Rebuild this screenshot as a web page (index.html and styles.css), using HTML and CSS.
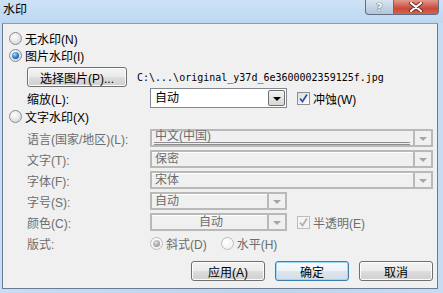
FILE: index.html
```html
<!DOCTYPE html>
<html lang="zh-CN">
<head>
    <meta charset="UTF-8">
    <title>水印</title>
    <link rel="stylesheet" href="styles.css">
</head>
<body>
    <div class="window">
        <div class="titlebar">
            <span class="title">水印</span>
            <div class="caption">
                <span class="cap help">?</span>
                <span class="cap close">
                    <svg width="16" height="10" viewBox="0 0 16 10">
                        <path d="M3 1 L13 9 M13 1 L3 9" stroke="#6b2a22" stroke-width="4" stroke-linecap="round"/>
                        <path d="M3 1 L13 9 M13 1 L3 9" stroke="#fff" stroke-width="2.2" stroke-linecap="round"/>
                    </svg>
                </span>
            </div>
        </div>

        <div class="client">
            <div class="radio-row"><span class="radio"></span>无水印(N)</div>
            <div class="radio-row"><span class="radio on"></span>图片水印(I)</div>

            <div class="sub">
                <div class="file-row">
                    <span class="btn pick">选择图片(P)...</span>
                    <span class="path">C:\...\original_y37d_6e3600002359125f.jpg</span>
                </div>
                <div class="scale-row">
                    <span class="label">缩放(L):</span>
                    <div class="combo">
                        <span class="combo-text">自动</span>
                        <span class="combo-arrow"></span>
                    </div>
                    <div class="check"><span class="box on">
                        <svg width="11" height="11" viewBox="0 0 11 11"><path d="M2 5.5 L4.5 8.5 L9 1.5" fill="none" stroke="#2e55a5" stroke-width="1.8"/></svg>
                    </span>冲蚀(W)</div>
                </div>
            </div>

            <div class="radio-row"><span class="radio"></span>文字水印(X)</div>

            <div class="text-grid">
                <span class="label off">语言(国家/地区)(L):</span>
                <div class="combo off wide">
                    <span class="combo-text lined">中文(中国)</span>
                    <span class="combo-arrow"></span>
                </div>

                <span class="label off">文字(T):</span>
                <div class="combo off wide">
                    <span class="combo-text">保密</span>
                    <span class="combo-arrow"></span>
                </div>

                <span class="label off">字体(F):</span>
                <div class="combo off wide">
                    <span class="combo-text">宋体</span>
                    <span class="combo-arrow"></span>
                </div>

                <span class="label off">字号(S):</span>
                <div class="combo off">
                    <span class="combo-text">自动</span>
                    <span class="combo-arrow"></span>
                </div>

                <span class="label off">颜色(C):</span>
                <div class="with-check">
                    <div class="combo off">
                        <span class="combo-text center">自动</span>
                        <span class="combo-arrow"></span>
                    </div>
                    <div class="check off"><span class="box">
                        <svg width="11" height="11" viewBox="0 0 11 11"><path d="M2 5.5 L4.5 8.5 L9 1.5" fill="none" stroke="#b0b0b0" stroke-width="1.8"/></svg>
                    </span>半透明(E)</div>
                </div>

                <span class="label off">版式:</span>
                <div class="layout-radios">
                    <div class="radio-row off"><span class="radio on dim"></span>斜式(D)</div>
                    <div class="radio-row off"><span class="radio dim"></span>水平(H)</div>
                </div>
            </div>

            <div class="actions">
                <span class="btn">应用(A)</span>
                <span class="btn default">确定</span>
                <span class="btn">取消</span>
            </div>
        </div>
    </div>
</body>
</html>
```

FILE: styles.css
```css
body {
    margin: 0;
    background: #c2d9f0;
    font-family: "Liberation Sans", "Noto Sans CJK SC", sans-serif;
    font-size: 12px;
    color: #000;
    text-autospace: no-autospace;
}
.window {
    width: 443px;
    height: 293px;
    background: linear-gradient(to right, #c6ddf3, #bad5ef 60%, #c6dcf2);
}
.titlebar {
    height: 23px;
    display: flex;
    justify-content: space-between;
    background: linear-gradient(to bottom, #cde2f6, #bdd7f0);
}
.title {
    padding-left: 3px;
    line-height: 20px;
}
.caption {
    display: flex;
    padding-right: 4px;
    height: 15px;
}
.cap {
    display: flex;
    align-items: center;
    justify-content: center;
    height: 14px;
    border: 1px solid #5e6f87;
    border-top: none;
}
.help {
    width: 27px;
    border-radius: 0 0 0 4px;
    background: linear-gradient(to bottom, #d9e4ef, #b4c6da);
    color: #fff;
    font-family: "DejaVu Sans", sans-serif;
    font-weight: bold;
    font-size: 11px;
    text-shadow: 0 0 1px #3a4a60, 0 0 1px #3a4a60;
}
.close {
    width: 44px;
    border-left: none;
    border-radius: 0 0 4px 0;
    background: linear-gradient(to bottom, #e49a8c, #c9493a 60%, #d4634f);
}
.client {
    box-sizing: border-box;
    margin-left: 2px;
    width: 436px;
    height: 266px;
    border: 1px solid #6c7b8f;
    border-top-color: #8e9bab;
    background: #f0f0f0;
    padding: 6px 0 0 6px;
}
.radio-row {
    display: flex;
    align-items: center;
    height: 17px;
    gap: 3px;
    white-space: nowrap;
}
.radio {
    box-sizing: border-box;
    width: 13px;
    height: 13px;
    border-radius: 50%;
    border: 1px solid #8b8d91;
    background: radial-gradient(circle at 40% 35%, #ffffff, #dcdcdc 70%, #c8c8c8);
    position: relative;
}
.radio.on::after {
    content: "";
    position: absolute;
    left: 2px;
    top: 2px;
    width: 7px;
    height: 7px;
    border-radius: 50%;
    background: radial-gradient(circle at 40% 35%, #a6dcff, #1e6dbf 60%, #123f7a);
}
.radio.dim {
    border-color: #bcbcbc;
    background: radial-gradient(circle at 40% 35%, #ffffff, #ececec);
}
.radio.on.dim::after {
    background: radial-gradient(circle at 40% 35%, #e2e2e2, #a4a4a4 60%, #8c8c8c);
}
.sub {
    padding-left: 18px;
}
.file-row {
    display: flex;
    align-items: center;
    gap: 10px;
    margin-top: 3px;
    height: 20px;
}
.btn {
    box-sizing: border-box;
    display: flex;
    align-items: center;
    justify-content: center;
    height: 20px;
    width: 74px;
    border: 1px solid #707070;
    border-radius: 3px;
    background: linear-gradient(to bottom, #f3f3f3 0%, #ebebeb 48%, #dddddd 52%, #cfcfcf 100%);
    box-shadow: inset 0 0 0 1px #fcfcfc;
}
.btn.pick {
    width: 100px;
}
.btn.default {
    border-color: #3c7fb1;
    background: linear-gradient(to bottom, #f6fafd 0%, #edf3f8 48%, #dde6ee 52%, #d3dde7 100%);
    box-shadow: inset 0 0 0 1px #9fd8f5;
}
.path {
    font-family: "DejaVu Sans Mono", monospace;
    font-size: 10px;
}
.scale-row {
    display: flex;
    align-items: center;
    margin-top: 1px;
    height: 20px;
}
.label {
    width: 123px;
    flex-shrink: 0;
    white-space: nowrap;
}
.off {
    color: #6d6d6d;
}
.combo {
    box-sizing: border-box;
    display: flex;
    width: 137px;
    height: 20px;
    border: 1px solid #828790;
    background: #fff;
    padding: 1px;
}
.combo-text {
    flex: 1;
    padding-left: 3px;
    line-height: 16px;
    white-space: nowrap;
}
.combo-text.center {
    text-align: center;
}
.combo-arrow {
    box-sizing: border-box;
    width: 17px;
    border: 1px solid #707070;
    border-radius: 2px;
    background: linear-gradient(to bottom, #f2f2f2, #d8d8d8);
    display: flex;
    align-items: center;
    justify-content: center;
}
.combo-arrow::after {
    content: "";
    border-left: 4px solid transparent;
    border-right: 4px solid transparent;
    border-top: 4px solid #000;
    margin-top: 1px;
}
.combo.off {
    height: 18px;
    border: 2px solid #b9b9b9;
    background: #f0f0f0;
    padding: 0;
}
.combo.off .combo-text {
    color: #6d6d6d;
    line-height: 14px;
    box-shadow: inset 0 1px 0 #ffffff;
}
.combo.off .combo-text.lined {
    margin: 0 3px 0 2px;
    padding-left: 1px;
    border-bottom: 3px double #8c8c8c;
    line-height: 11px;
    box-shadow: none;
}
.combo.off .combo-arrow {
    width: 18px;
    border: none;
    border-left: 2px solid #b9b9b9;
    border-radius: 0;
    background: #f0f0f0;
}
.combo.off .combo-arrow::after {
    border-top-color: #a5a5a5;
}
.combo.wide {
    width: 283px;
}
.check {
    display: flex;
    align-items: center;
    gap: 3px;
    margin-left: 10px;
    white-space: nowrap;
}
.box {
    box-sizing: border-box;
    width: 13px;
    height: 13px;
    border: 1px solid #8e8f8f;
    background: linear-gradient(135deg, #dcdcdc, #ffffff);
    display: flex;
    align-items: center;
    justify-content: center;
}
.check.off .box {
    border-color: #bcbcbc;
    background: #f4f4f4;
}
.text-grid {
    display: grid;
    grid-template-columns: 123px auto;
    grid-auto-rows: 18px;
    row-gap: 3px;
    align-items: center;
    margin-top: 4px;
    padding-left: 18px;
}
.with-check {
    display: flex;
    align-items: center;
}
.layout-radios {
    display: flex;
    gap: 14px;
}
.actions {
    display: flex;
    justify-content: flex-end;
    gap: 10px;
    margin-top: 9px;
    padding-right: 4px;
}
```
